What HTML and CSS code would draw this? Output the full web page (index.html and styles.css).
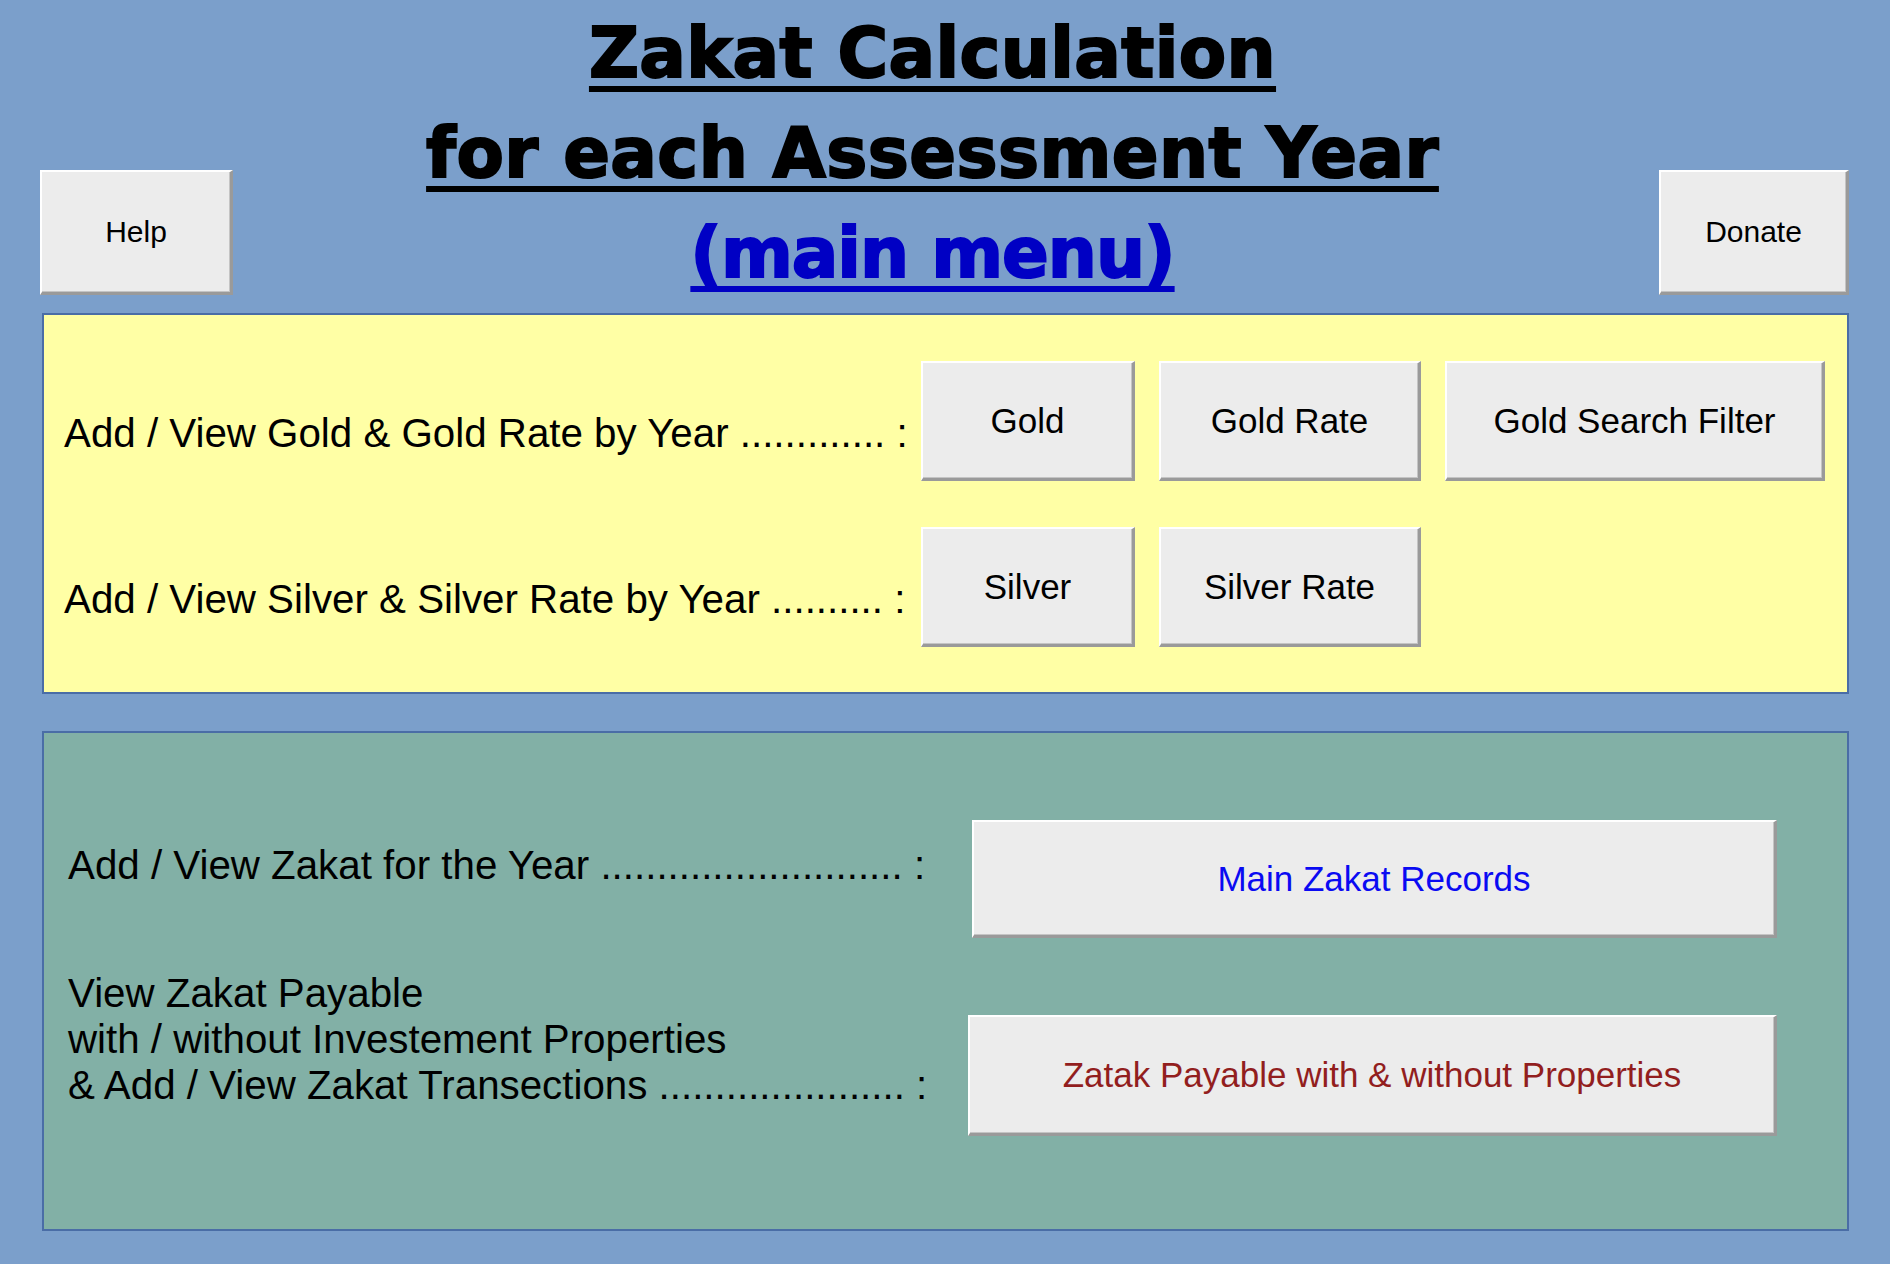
FILE: index.html
```html
<!DOCTYPE html>
<html lang="en">
<head>
<meta charset="utf-8">
<title>Zakat Calculation - main menu</title>
<link rel="stylesheet" href="styles.css">
</head>
<body>
<div class="page">
  <header class="header">
    <button class="btn side-btn help-btn" type="button">Help</button>
    <h1 class="title">
      <span class="title-line"><span class="ul">Zakat Calculation</span></span>
      <span class="title-line"><span class="ul">for each Assessment Year</span></span>
      <span class="title-line"><a class="ul link" href="#">(main menu)</a></span>
    </h1>
    <button class="btn side-btn donate-btn" type="button">Donate</button>
  </header>

  <section class="panel panel-yellow">
    <div class="row">
      <div class="label label-yellow">Add / View Gold &amp; Gold Rate by Year ............. :</div>
      <div class="btn-group">
        <button class="btn metal-btn w-gold" type="button">Gold</button>
        <button class="btn metal-btn w-rate" type="button">Gold Rate</button>
        <button class="btn metal-btn w-filter" type="button">Gold Search Filter</button>
      </div>
    </div>
    <div class="row">
      <div class="label label-yellow">Add / View Silver &amp; Silver Rate by Year .......... :</div>
      <div class="btn-group">
        <button class="btn metal-btn w-gold" type="button">Silver</button>
        <button class="btn metal-btn w-rate" type="button">Silver Rate</button>
      </div>
    </div>
  </section>

  <section class="panel panel-green">
    <div class="zrow zrow-1">
      <div class="label zlabel-1">Add / View Zakat for the Year ........................... :</div>
      <button class="btn zakat-btn zakat-main" type="button">Main Zakat Records</button>
    </div>
    <div class="zrow zrow-2">
      <div class="label zlabel-2">View Zakat Payable<br>with / without Investement Properties<br>&amp; Add / View Zakat Transections ...................... :</div>
      <button class="btn zakat-btn zakat-pay" type="button">Zatak Payable with &amp; without Properties</button>
    </div>
  </section>
</div>
</body>
</html>
```
FILE: styles.css
```css
html, body {
  margin: 0;
  padding: 0;
}
body {
  background: #7b9fcb;
  font-family: "Liberation Sans", Arial, Helvetica, sans-serif;
  color: #000;
}
.page {
  width: 1890px;
  min-height: 1264px;
  box-sizing: border-box;
  padding: 0 41px 0 42px;
}

/* ---------- header ---------- */
.header {
  display: grid;
  grid-template-columns: 192px 1fr 190px;
  align-items: start;
  margin-left: -2px;
}
.title {
  margin: 0;
  padding: 3px 26px 0 0;
  text-align: center;
  font-family: "DejaVu Sans", "Liberation Sans", sans-serif;
  font-weight: bold;
  font-size: 69px;
  line-height: 100px;
  letter-spacing: 0.4px;
  -webkit-text-stroke: 2px currentColor;
}
.title-line {
  display: block;
}
.title-line:last-child {
  letter-spacing: -1px;
}
.ul {
  text-decoration: underline;
  text-decoration-thickness: 6px;
  text-underline-offset: 9px;
  text-decoration-skip-ink: none;
}
.link {
  color: #0000c4;
}

/* ---------- buttons ---------- */
.btn {
  font-family: "Liberation Sans", Arial, Helvetica, sans-serif;
  background: #ececec;
  border-style: solid;
  border-width: 2px 3px 3px 2px;
  border-color: #ffffff #9a9a9a #9a9a9a #ffffff;
  box-shadow: inset -1px -1px 0 #c4c4c4;
  box-sizing: border-box;
  padding: 0;
  margin: 0;
  color: #000;
  cursor: pointer;
}
.side-btn {
  margin-top: 170px;
  height: 125px;
  font-size: 30px;
}
.help-btn { width: 193px; }
.donate-btn { width: 190px; }

/* ---------- panels ---------- */
.panel {
  border: 2px solid #4a6da6;
}
.label {
  font-size: 40.3px;
  line-height: 46px;
  white-space: nowrap;
}

.panel-yellow {
  margin-top: 10px;
  background: #ffffa5;
  padding: 46px 20px 45px 20px;
  display: flex;
  flex-direction: column;
  gap: 46px;
}
.row {
  display: flex;
  align-items: flex-start;
}
.label-yellow {
  flex: 0 0 857px;
  margin-top: 50px;
}
.btn-group {
  display: flex;
  gap: 24px;
}
.metal-btn {
  height: 120px;
  font-size: 35px;
}
.w-gold { width: 214px; }
.w-rate { width: 262px; }
.w-filter { width: 380px; }

.panel-green {
  margin-top: 37px;
  background: #82b0a6;
  padding: 87px 0 93px 24px;
  display: flex;
  flex-direction: column;
  gap: 33px;
}
.zrow {
  display: flex;
  align-items: flex-start;
}
.zlabel-1 {
  flex: 0 0 904px;
  margin-top: 23px;
}
.zlabel-2 {
  flex: 0 0 900px;
}
.zakat-btn {
  font-size: 35px;
}
.zakat-main {
  width: 805px;
  height: 118px;
  color: #0a0af2;
}
.zakat-pay {
  width: 809px;
  height: 121px;
  margin-top: 44px;
  color: #921e1e;
}
```
